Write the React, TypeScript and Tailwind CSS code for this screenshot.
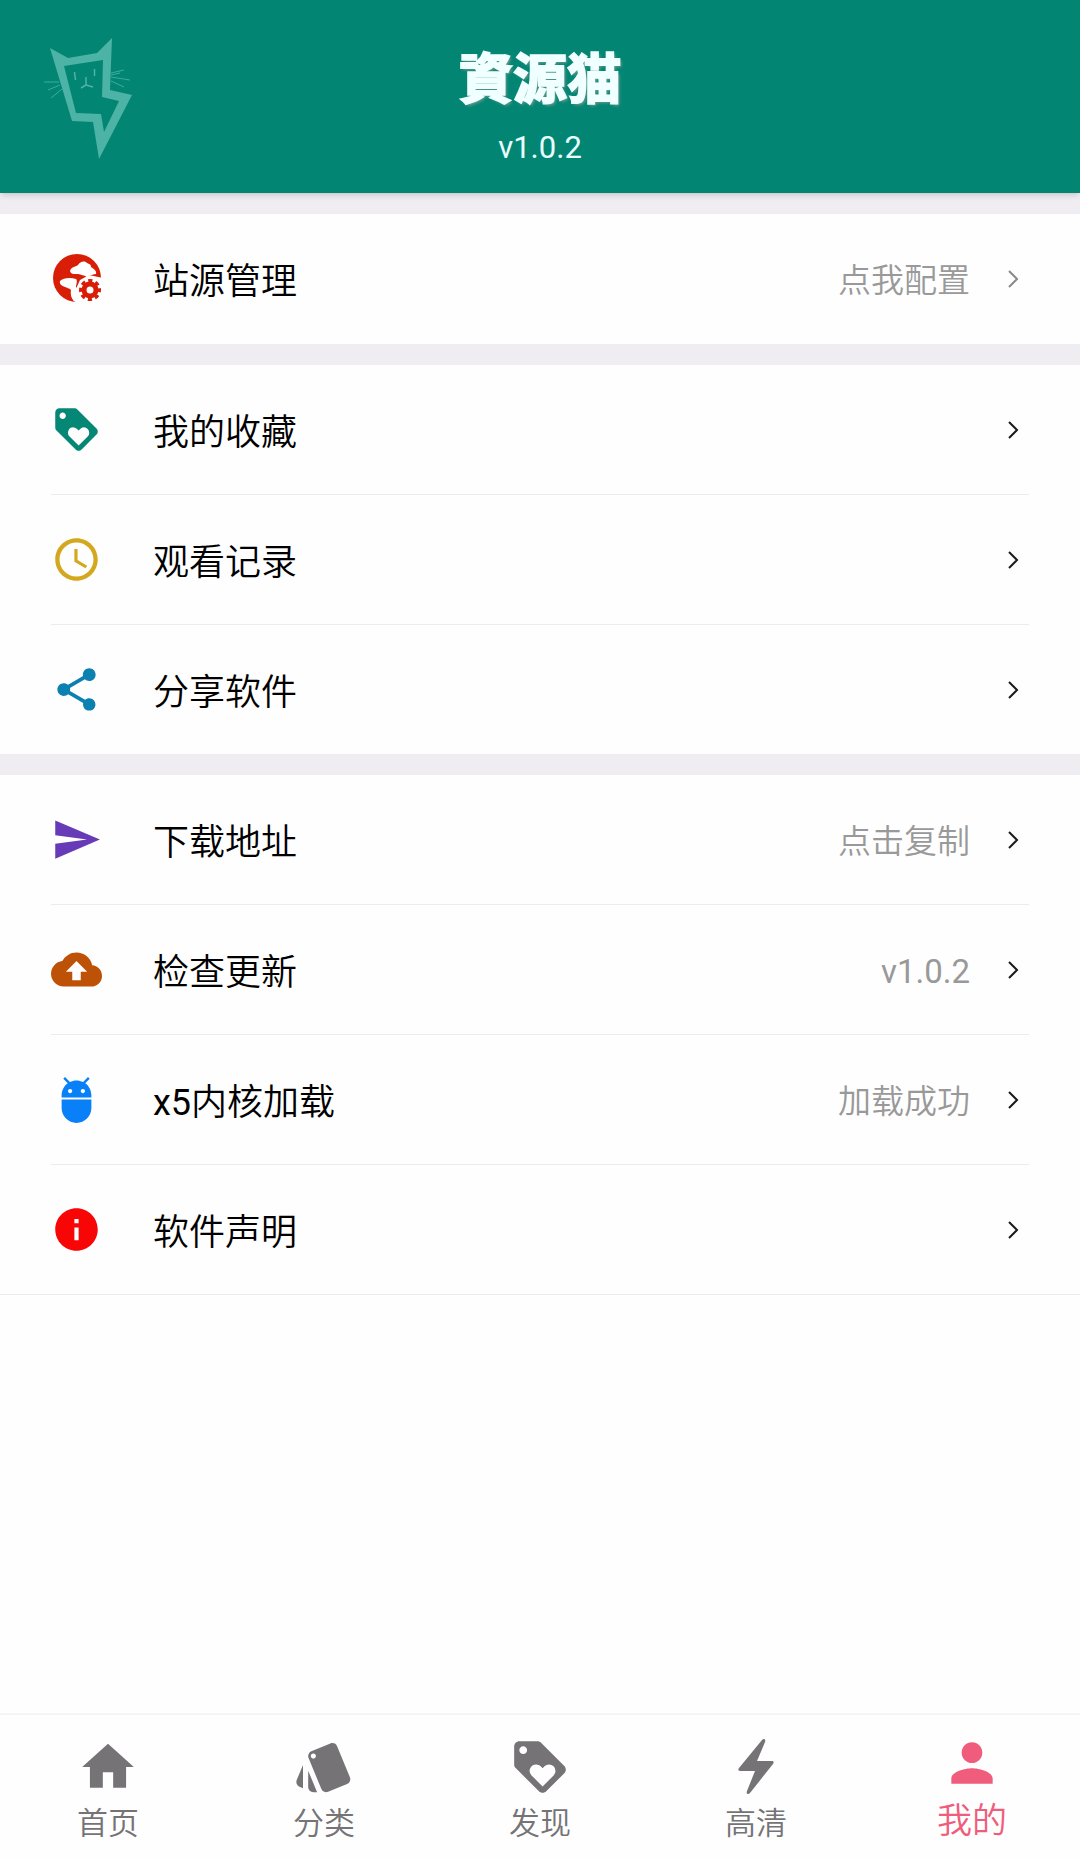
import React from "react";
import {
  MdAccessTime,
  MdBackup,
  MdHome,
  MdInfo,
  MdLoyalty,
  MdPerson,
  MdShare,
  MdStyle,
} from "react-icons/md";

interface RowProps {
  icon: React.ReactNode;
  label: React.ReactNode;
  value?: React.ReactNode;
  muted?: boolean;
}

const CatLogo = () => (
  <svg
    viewBox="0 0 100 130"
    className="absolute top-[34px] left-10 w-[100px] h-[130px]"
    fill="none"
    stroke="#4db3a6"
    aria-hidden="true"
  >
    <path
      fill="#4db3a6"
      stroke="none"
      fillRule="evenodd"
      d="M10 14L28 24L57 19L72 4L70 56L92 61L59 125L53 88L32 87ZM24 32L36 79L61 80L64 98L79 67L62 63L63 26Z"
    />
    <path strokeWidth="1.5" d="M34.5 38L35.5 46M54.5 35V42M46 43V51L41 54M46 51L53 53" />
    <path
      strokeWidth="1"
      opacity="0.8"
      d="M4 48L19 48M8 56L20 51M11 64L22 55M71 39L84 36M71 43L90 46M71 41L80 39M71 47L84 53"
    />
  </svg>
);

const GlobeGearIcon = () => (
  <svg viewBox="0 0 64 64" className="size-16 shrink-0" aria-hidden="true">
    <circle cx="32" cy="31" r="24" fill="#d81e06" />
    <path
      fill="#fff"
      d="M25 24C26 20 30 20 33 18C35 15 39 13 42 16C44 17 46 17 46 20C49 22 52 24 51 27C47 28 44 28 42 30C39 28 36 28 33 27C30 27 26 28 25 24ZM15 34C18 31 25 30 31 32C33 34 31 37 31 40C34 44 34 50 31 55C27 54 25 48 26 43C24 41 22 41 20 40C17 39 14 37 15 34Z"
    />
    <path fill="#fff" d="M35 33L44 28L58 31V58H31L30 44Z" />
    <circle cx="45" cy="43" r="6" fill="none" stroke="#d81e06" strokeWidth="5" />
    <circle
      cx="45"
      cy="43"
      r="9"
      fill="none"
      stroke="#d81e06"
      strokeWidth="4"
      strokeDasharray="4 3.069"
      strokeDashoffset="2"
    />
  </svg>
);

const SendIcon = () => (
  <svg viewBox="0 0 24 24" className="size-[51px]" fill="#673ab7" aria-hidden="true">
    <path d="M2 21L23 12L2 3V10L17 12L2 14Z" />
  </svg>
);

const AndroidIcon = () => (
  <svg viewBox="0 0 24 24" className="size-[51px]" fill="#0a80f8" aria-hidden="true">
    <path d="M5 16c0 3.87 3.13 7 7 7s7-3.13 7-7v-4H5v4zM16.12 4.37l2.1-2.1-.82-.83-2.3 2.31C14.16 3.28 13.12 3 12 3s-2.16.28-3.09.75L6.6 1.44l-.82.83 2.1 2.1C6.14 5.64 5 7.68 5 10v1h14v-1c0-2.32-1.14-4.36-2.88-5.63zM9 9c-.55 0-1-.45-1-1s.45-1 1-1 1 .45 1 1-.45 1-1 1zm6 0c-.55 0-1-.45-1-1s.45-1 1-1 1 .45 1 1-.45 1-1 1z" />
  </svg>
);

const BoltIcon = () => (
  <svg viewBox="0 0 62 62" className="size-[62px]" fill="#757376" aria-hidden="true">
    <path d="M37 4C39 2 41 3 40 6L32 25H47C49 25 49 27 48 28L25 57C23 59 21 58 22 55L30 35H15C13 35 13 33 14 32Z" />
  </svg>
);

const Chevron = ({ muted }: { muted?: boolean }) => (
  <svg
    viewBox="0 0 12 20"
    className={`w-3 h-5 ml-[37px] ${muted ? "stroke-[#8a8a8a]" : "stroke-[#1a1a1a]"}`}
    fill="none"
    strokeWidth="2"
    aria-hidden="true"
  >
    <path d="M2 2L10 10L2 18" />
  </svg>
);

// Latin text needs the regular weight to sit evenly next to the light CJK glyphs
const Latin = ({ children }: { children: React.ReactNode }) => (
  <span className="font-normal">{children}</span>
);

const Row = ({ icon, label, value, muted }: RowProps) => (
  <li className="border-b border-[#ececec] last:border-b-0">
    <button type="button" className="flex items-center w-full h-[129px] pr-[10px] text-left">
      <span className="flex justify-center items-center w-[51px]">{icon}</span>
      <span className="ml-[51px] pt-1.5 flex-1 text-[36px] leading-[48px] text-black">{label}</span>
      {value && <span className="pt-1 text-[33px] leading-[48px] text-[#999]">{value}</span>}
      <Chevron muted={muted} />
    </button>
  </li>
);

const Group = ({ children, className = "" }: { children: React.ReactNode; className?: string }) => (
  <ul className={`bg-[#fefefe] px-[51px] ${className}`}>{children}</ul>
);

const tabs = [
  { label: "首页", icon: <MdHome size={62} /> },
  { label: "分类", icon: <MdStyle size={62} /> },
  { label: "发现", icon: <MdLoyalty size={62} /> },
  { label: "高清", icon: <BoltIcon /> },
  { label: "我的", icon: <MdPerson size={62} />, active: true },
];

const App = () => {
  return (
    <div className="flex flex-col min-h-screen bg-[#fefefe] font-[350] font-['Roboto','Noto_Sans_CJK_SC',sans-serif]">
      <header className="relative z-10 flex flex-col items-center h-[193px] pt-11 bg-[#028673] text-[#e9ffff] shadow-md">
        <CatLogo />
        <h1 className="text-[54px] leading-[64px] font-bold font-['Noto_Sans_CJK_TC',sans-serif] text-[#f0ffff] [-webkit-text-stroke:2px_#f0ffff] [stroke-linejoin:round] [text-shadow:2px_2px_3px_#6f9a8e]">
          資源猫
        </h1>
        <p className="mt-5 text-[31px] leading-[40px] font-normal">v1.0.2</p>
      </header>

      <main className="flex flex-col gap-[21px] bg-[#efedf1] pt-[21px]">
        <Group className="pb-px">
          <Row icon={<GlobeGearIcon />} label="站源管理" value="点我配置" muted />
        </Group>
        <Group>
          <Row icon={<MdLoyalty size={51} color="#058775" />} label="我的收藏" />
          <Row icon={<MdAccessTime size={51} color="#d4a81e" />} label="观看记录" />
          <Row icon={<MdShare size={51} color="#0c80b0" />} label="分享软件" />
        </Group>
        <Group className="border-b border-[#ececec]">
          <Row icon={<SendIcon />} label="下载地址" value="点击复制" />
          <Row
            icon={<MdBackup size={51} color="#bd5207" />}
            label="检查更新"
            value={<Latin>v1.0.2</Latin>}
          />
          <Row
            icon={<AndroidIcon />}
            label={
              <>
                <Latin>x5</Latin>内核加载
              </>
            }
            value="加载成功"
          />
          <Row icon={<MdInfo size={51} color="#f80505" />} label="软件声明" />
        </Group>
      </main>

      <nav className="grid grid-cols-5 h-[146px] mt-auto border-t-2 border-[#f5f5f5]">
        {tabs.map((tab) => (
          <button
            key={tab.label}
            type="button"
            className={`flex flex-col items-center justify-end gap-[3px] pb-3 ${
              tab.active ? "text-[#f05c7c]" : "text-[#757376]"
            }`}
          >
            {tab.icon}
            <span className={tab.active ? "text-[35px] leading-[50px]" : "text-[31px] leading-[46px]"}>
              {tab.label}
            </span>
          </button>
        ))}
      </nav>
    </div>
  );
};

export default App;
